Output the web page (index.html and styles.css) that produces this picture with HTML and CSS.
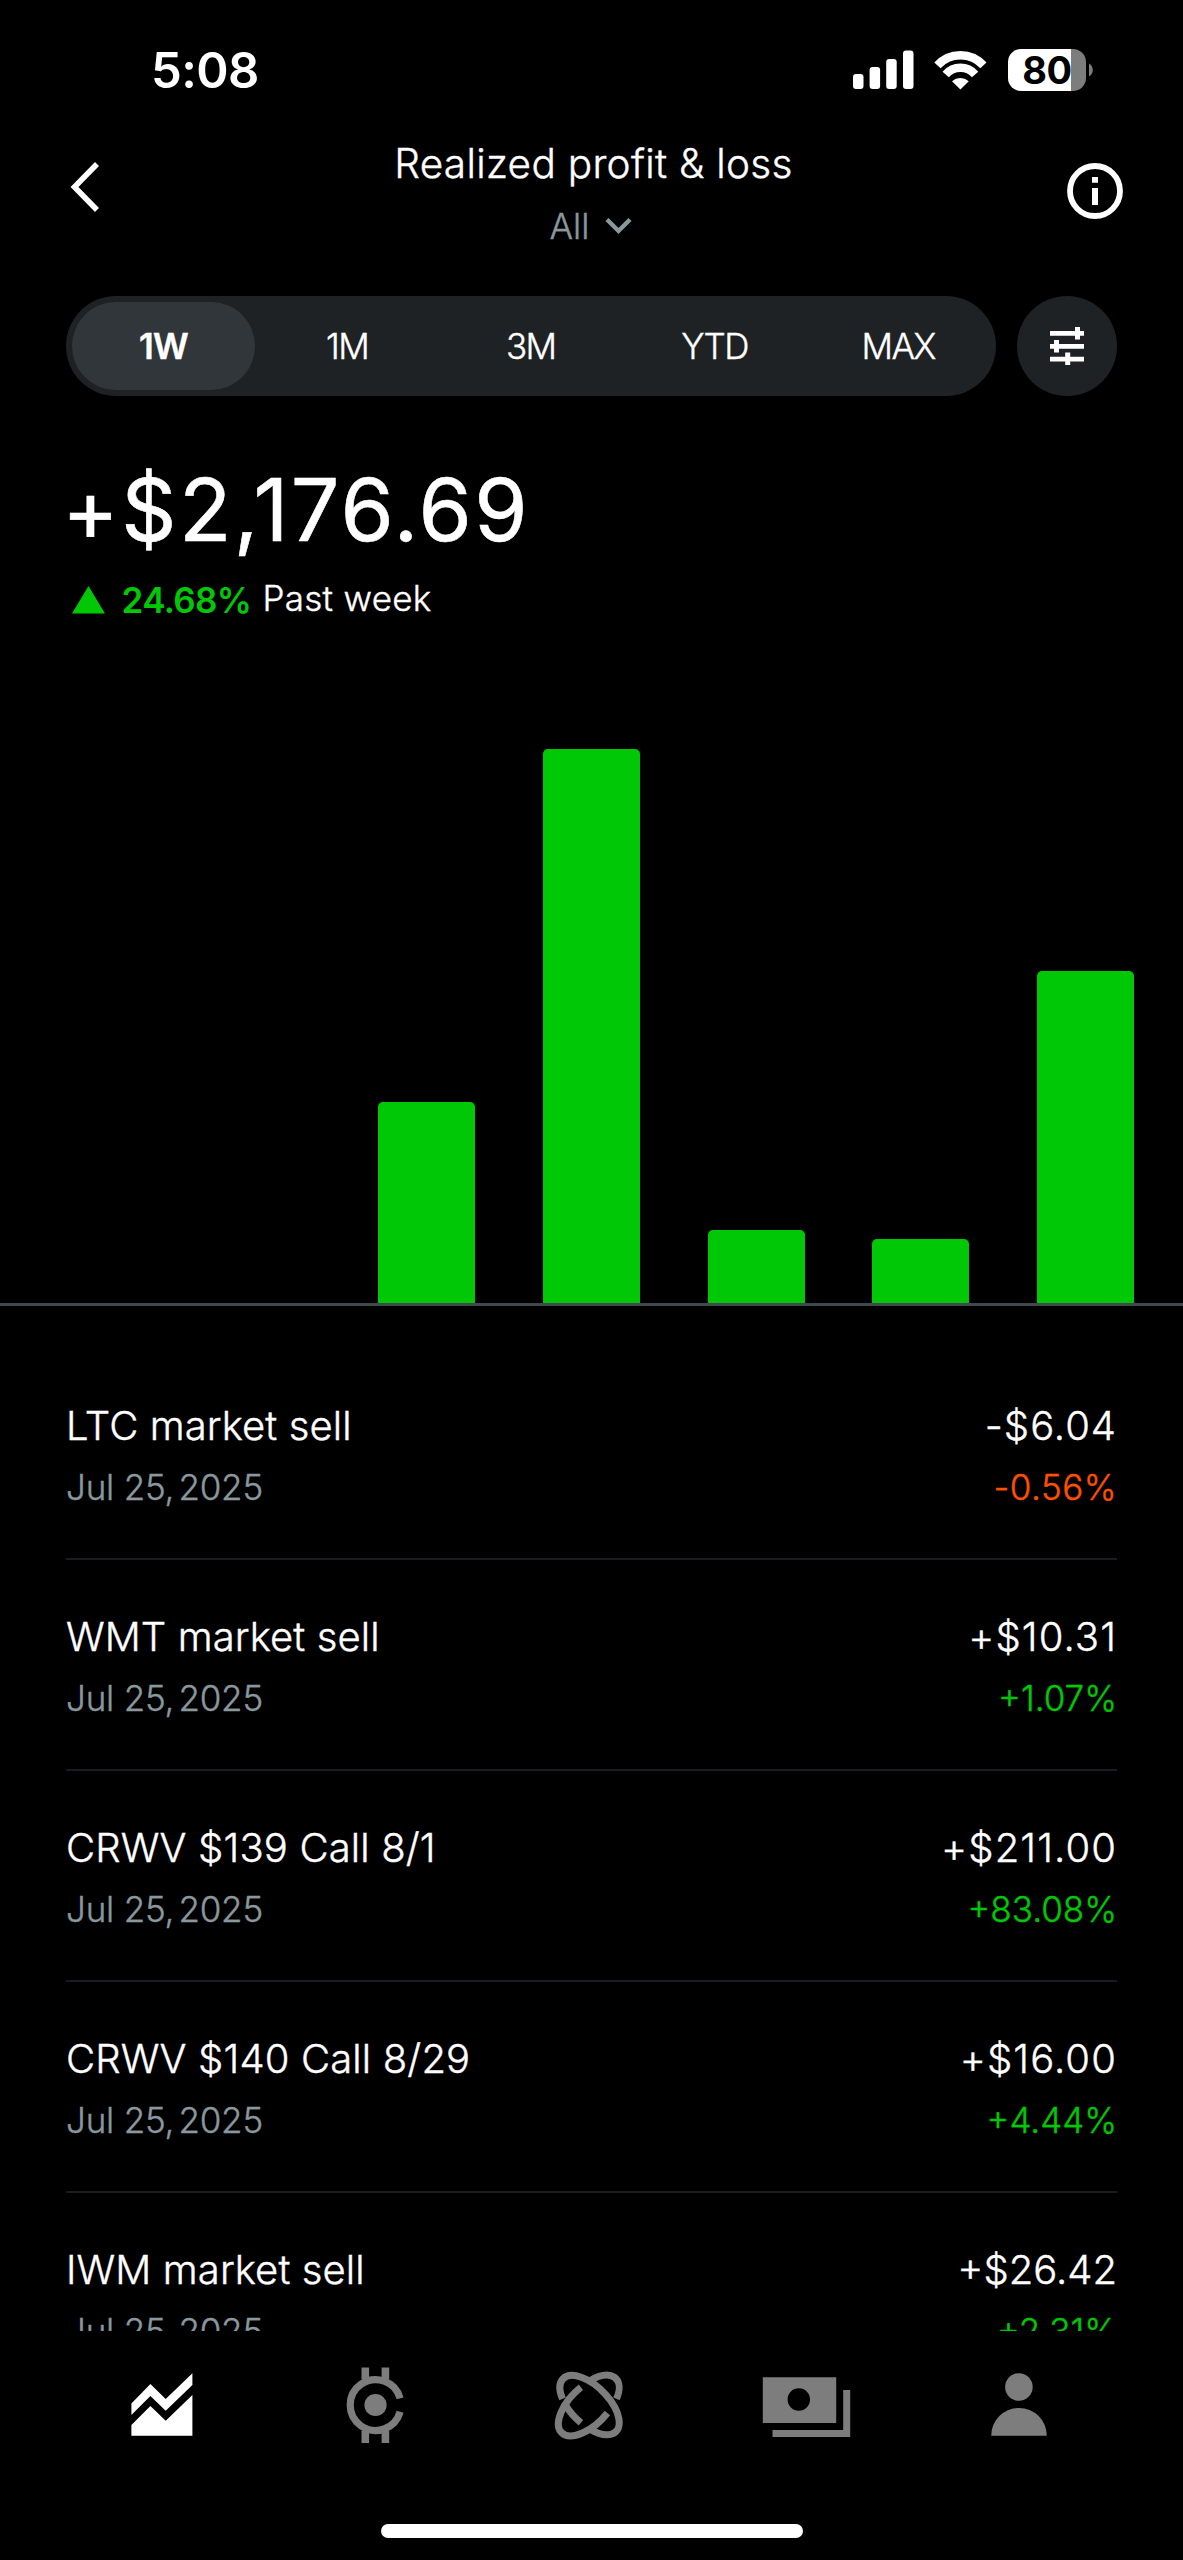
FILE: index.html
```html
<!DOCTYPE html>
<html lang="en">
<head>
<meta charset="utf-8">
<title>Realized profit &amp; loss</title>
<link rel="stylesheet" href="styles.css">
</head>
<body>
<div class="screen">
  <div class="status">
    <span class="clock">5:08</span>
    <div class="status-icons">
      <svg class="signal" width="61" height="39" viewBox="0 0 61 39" fill="#fff"><rect y="24" width="10.5" height="15" rx="3"/><rect x="16.6" y="17" width="10.5" height="22" rx="3"/><rect x="33.2" y="9" width="10.5" height="30" rx="3"/><rect x="50" y="0.5" width="10.5" height="38.5" rx="3"/></svg>
      <svg class="wifi" width="53" height="40" viewBox="0 0 53 40"><g fill="none" stroke="#fff" stroke-width="8.4"><path d="M3.4 15.4A31 31 0 0 1 49.4 15.4"/><path d="M11.7 24.4A19.5 19.5 0 0 1 41.1 24.4"/></g><path d="M18 31.2A13 13 0 0 1 34.8 31.2L26.4 39.6Z" fill="#fff"/></svg>
      <div class="battery">80</div>
      <svg class="nub" width="5" height="14" viewBox="0 0 5 14"><path d="M0 0.5A7.5 7.5 0 0 1 0 13.5Z" fill="#7d7d7d"/></svg>
    </div>
  </div>

  <header class="header">
    <svg class="back" width="30" height="52" viewBox="0 0 30 52"><path d="M28 3L5.5 26L28 49" fill="none" stroke="#fff" stroke-width="5.6"/></svg>
    <div class="heading">
      <h1 class="title">Realized profit &amp; loss</h1>
      <div class="scope">All<svg class="chevron" width="27" height="18" viewBox="0 0 27 18"><path d="M2 2.5L13.5 14L25 2.5" fill="none" stroke="#8a989e" stroke-width="4.4"/></svg></div>
    </div>
    <svg class="info" width="56" height="56" viewBox="0 0 56 56"><circle cx="28" cy="28" r="25" fill="none" stroke="#fff" stroke-width="5.8"/><path d="M25 14h6v5.8h-6zM25 25h6v17h-6z" fill="#fff"/></svg>
  </header>

  <div class="filters">
    <div class="ranges">
      <span class="range selected">1W</span><span class="range">1M</span><span class="range">3M</span><span class="range">YTD</span><span class="range">MAX</span>
    </div>
    <div class="tune">
      <svg width="34" height="38" viewBox="0 0 34 38" fill="#fff"><path d="M0 4h34v4.8H0zM0 17h34v4.8H0zM0 29.8h34v4.8H0zM25 0h5v12.6h-5zM4 13h5v12.6H4zM15.2 25.6h5v12.4h-5z"/></svg>
    </div>
  </div>

  <div class="total">+$2,176.69</div>
  <div class="change">
    <svg class="up" width="33" height="28" viewBox="0 0 33 28"><path d="M16.5 0L33 27.5H0Z" fill="#00c806"/></svg>
    <span class="change-pct">24.68%</span>
    <span class="change-span">Past week</span>
  </div>

  <div class="chart">
    <div class="bar" style="height:0"></div>
    <div class="bar" style="height:0"></div>
    <div class="bar" style="height:200.6px"></div>
    <div class="bar" style="height:554px"></div>
    <div class="bar" style="height:72.4px"></div>
    <div class="bar" style="height:63.4px"></div>
    <div class="bar" style="height:331.3px"></div>
  </div>

  <div class="list">
    <div class="row"><div><div class="name">LTC market sell</div><div class="date">Jul 25, <span class="year">2025</span></div></div><div class="values"><div class="amount">-$6.04</div><div class="pct loss">-0.56%</div></div></div>
    <div class="row"><div><div class="name">WMT market sell</div><div class="date">Jul 25, <span class="year">2025</span></div></div><div class="values"><div class="amount wide">+$10.31</div><div class="pct">+1.07%</div></div></div>
    <div class="row"><div><div class="name option">CRWV $139 Call 8/1</div><div class="date">Jul 25, <span class="year">2025</span></div></div><div class="values"><div class="amount wide">+$211.00</div><div class="pct">+83.08%</div></div></div>
    <div class="row"><div><div class="name option">CRWV $140 Call 8/29</div><div class="date">Jul 25, <span class="year">2025</span></div></div><div class="values"><div class="amount wide">+$16.00</div><div class="pct">+4.44%</div></div></div>
    <div class="row"><div><div class="name">IWM market sell</div><div class="date">Jul 25, <span class="year">2025</span></div></div><div class="values"><div class="amount tight">+$26.42</div><div class="pct">+2.31%</div></div></div>
  </div>

  <nav class="tabs">
    <svg viewBox="0 0 100 90" fill="#fff"><path d="M19.4 43.5L38.4 24L53.7 39L80.4 13.3V25L53.7 50.7L38.4 36L19.4 55Z"/><path d="M19.4 65L38.4 46L53.7 60.7L80.4 35V75.7H19.4Z"/></svg>
    <svg viewBox="0 0 100 90"><path d="M74.1 38.4A25.4 25.4 0 1 0 74.1 51.8" fill="none" stroke="#7d7d7d" stroke-width="7.2"/><circle cx="49.5" cy="45" r="11.1" fill="#7d7d7d"/><path d="M35.5 7.5h7.6v12h-7.6zM55.6 7.5h7.6v12h-7.6zM35.5 71h7.6v12h-7.6zM55.6 71h7.6v12h-7.6z" fill="#7d7d7d"/></svg>
    <svg viewBox="0 0 100 90" fill="none" stroke="#7d7d7d" stroke-width="7"><path d="M22.5 38.9A37.4 19 45 1 1 49.5 69"/><path d="M25.5 45A37.4 19 45 0 0 40.9 62.8"/><path d="M76.5 38.9A37.4 19 -45 0 0 49.5 21"/><path d="M40.9 27.2A37.4 19 -45 1 0 67.4 53"/></svg>
    <svg viewBox="0 0 100 90" fill="#7d7d7d"><path fill-rule="evenodd" d="M7.8 17.3H81.2V63H7.8ZM43.8 28.3a11.2 11.2 0 1 0 0 22.4a11.2 11.2 0 1 0 0-22.4Z"/><path d="M88.2 30h7v47H17.5v-7H88.2Z"/></svg>
    <svg viewBox="0 0 100 90" fill="#7d7d7d"><circle cx="49.9" cy="27" r="13.8"/><path d="M22.2 75.7a27.8 27.8 0 0 1 55.6 0Z"/></svg>
  </nav>
  <div class="home-indicator"></div>
</div>
</body>
</html>
```
FILE: styles.css
```css
* { box-sizing: border-box; }
body { margin: 0; background: #000; }
svg { display: block; flex: none; }
.screen {
  width: 1183px; height: 2560px; overflow: hidden;
  background: #000; color: #fff;
  font-family: Inter, "Liberation Sans", sans-serif; font-weight: 300;
  display: flex; flex-direction: column;
}

.status { height: 139px; flex: none; padding: 0 89px 0 151px; display: flex; align-items: center; justify-content: space-between; }
.clock { font-size: 49px; font-weight: 600; letter-spacing: -0.6px; line-height: 60px; padding-top: 2px; }
.status-icons { display: flex; align-items: center; }
.wifi { margin: 0 21px 0 20px; }
.battery {
  width: 78px; height: 42px; border-radius: 13px; margin-right: 3.5px; padding-left: 1px;
  background: linear-gradient(90deg, #fff 63px, #7d7d7d 63px);
  color: #000; font-size: 38px; font-weight: 700; line-height: 42px; text-align: center; letter-spacing: -0.5px;
}

.header { height: 157px; flex: none; padding: 1px 60px 0 69px; display: flex; justify-content: space-between; }
.back { margin-top: 21px; }
.info { margin-top: 23px; }
.heading { display: flex; flex-direction: column; align-items: center; padding-left: 21px; }
.title { margin: 0; font-size: 40.5px; font-weight: 300; line-height: 47px; letter-spacing: 0.3px; }
.scope { display: flex; align-items: center; margin-top: 18.5px; font-size: 35px; line-height: 40px; color: #8a989e; padding-right: 5px; }
.chevron { margin-left: 16px; }

/* The light cut is slightly thin at these sizes; a hairline stroke evens it out. */
.title, .scope, .range, .change-span, .name, .date, .amount, .pct { -webkit-text-stroke: 0.4px currentColor; }

.filters { height: 99.5px; flex: none; padding: 0 66px; display: flex; justify-content: space-between; }
.ranges { width: 929.5px; padding: 5.5px; border-radius: 50px; background: #1e2224; display: flex; }
.range { flex: 1; display: flex; align-items: center; justify-content: center; font-size: 35px; letter-spacing: -1.7px; border-radius: 44px; }
.range.selected { background: #31363a; font-weight: 600; letter-spacing: -1px; }
.tune { width: 100px; border-radius: 50%; background: #1e2224; display: flex; align-items: center; justify-content: center; }

.total { flex: none; margin: 64.5px 0 0 62px; font-size: 86px; font-weight: 400; line-height: 100px; letter-spacing: 2.4px; -webkit-text-stroke: 0.6px currentColor; }
.change { flex: none; height: 40px; margin: 19.5px 0 0 72px; display: flex; align-items: center; font-size: 35px; line-height: 40px; }
.change-pct { margin: 1px 0 0 16.5px; color: #00c806; font-weight: 600; letter-spacing: -0.6px; }
.change-span { margin: -3px 0 0 11px; letter-spacing: 0.3px; }

.chart { flex: none; height: 686px; border-bottom: 3px solid #3f494d; padding-left: 49.2px; display: flex; align-items: flex-end; gap: 67.6px; }
.bar { width: 97px; background: #00c806; border-radius: 5px 5px 0 0; }

.list { flex: none; height: 1025px; padding: 43px 66px 0; overflow: hidden; }
.row { height: 211px; padding-top: 53.5px; border-bottom: 2px solid #1a1d1f; display: flex; justify-content: space-between; }
.name, .amount { font-size: 40px; line-height: 48px; }
.name { letter-spacing: 0.1px; }
.name.option { letter-spacing: 0.15px; }
.date, .pct { margin-top: 12.5px; font-size: 35px; line-height: 48px; }
.date { color: #8a989e; letter-spacing: -0.2px; }
.year { margin-left: -5.5px; }
.values { text-align: right; }
.amount { letter-spacing: 1px; }
.amount.wide { letter-spacing: 1.1px; }
.amount.tight { letter-spacing: 0; }
.pct { color: #00c806; letter-spacing: 0; }
.pct.loss { color: #ff5000; letter-spacing: 0.5px; }

.tabs { flex: none; height: 193px; padding: 29px 57px 0 54.5px; display: grid; grid-template-columns: repeat(5, 1fr); justify-items: center; }
.tabs svg { width: 100px; height: 90px; }
.home-indicator { flex: none; width: 422.5px; height: 14px; border-radius: 7px; background: #fff; margin-left: 380.5px; }
```
